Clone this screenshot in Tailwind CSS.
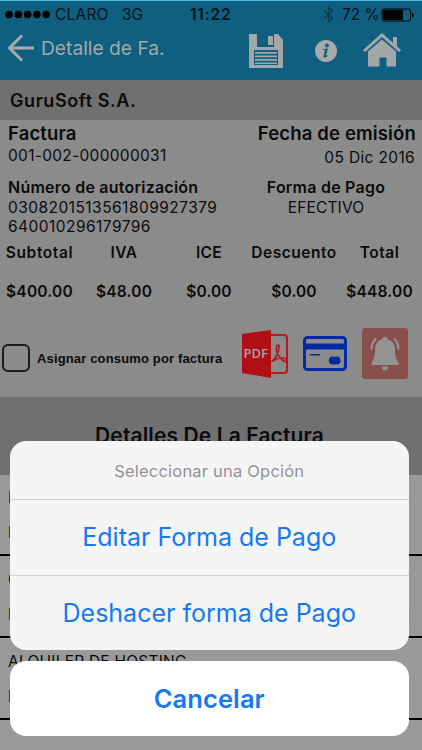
<!DOCTYPE html>
<html lang="es">
<head>
<meta charset="utf-8">
<title>Detalle de Factura</title>
<script src="https://cdn.jsdelivr.net/npm/@tailwindcss/browser@4"></script>
</head>
<body class="relative h-[750px] w-[422px] overflow-hidden bg-[#999] font-['Inter','Liberation_Sans',sans-serif] text-[#0b0b0b]">
<header class="h-20 border-t border-[#4fb9df] bg-[#0e5f80]">
  <div class="flex h-[27px] items-center pl-[5px] pr-[8px] text-[15.5px] text-[#05131a]">
    <svg class="h-[9px] w-[45px]" viewBox="0 0 45 9" fill="#000"><circle cx="4" cy="4.5" r="3.8"/><circle cx="13.3" cy="4.5" r="3.8"/><circle cx="22.6" cy="4.5" r="3.8"/><circle cx="31.9" cy="4.5" r="3.8"/><circle cx="41.2" cy="4.5" r="3.8"/></svg>
    <span class="ml-[5px] w-[67px] tracking-[.2px]">CLARO</span><span class="w-[68px]">3G</span>
    <span class="font-semibold tracking-[.8px]">11:22</span>
    <svg class="ml-auto h-[17px] w-[11px]" viewBox="0 0 11 17" fill="none" stroke="#0a3a50" stroke-width="1.3"><path d="M1 4.500 9.500 12 5.500 16V1l4 4L1 12.500"/></svg>
    <span class="ml-[8px] w-[39px] whitespace-nowrap text-[15.5px]">72 %</span>
    <svg class="h-[14px] w-[33px]" viewBox="0 0 33 14"><rect x="1" y="1" width="28.500" height="12" rx="2" fill="none" stroke="#000"/><rect x="2" y="2" width="20" height="10" rx="1"/><path d="M31 4.500c2 .6 2 4.400 0 5z"/></svg>
  </div>
  <div class="flex h-[46px] items-center pl-[7px]">
    <svg class="mt-[-6px] h-7 w-7" viewBox="0 0 28 28" fill="none" stroke="#a9a9a9" stroke-width="3"><path d="M15 1.500 2.500 14 15 26.500M2.500 14H27"/></svg>
    <span class="mt-[-5px] ml-[6px] w-[208px] whitespace-nowrap text-[19.200px] text-[#a4a9ab]">Detalle de Fa.</span>
    <svg class="h-[34px] w-[34px]" viewBox="0 0 34 34" fill="#a3a7a8"><path fill-rule="evenodd" d="M0 0h8v13h17V0h4l5 6v28H0zM5 16h24v15H5zM19 2h5v9h-5z"/><path d="M6 18h22v1.800H6zm0 3.500h22v1.800H6zM6 25h22v1.800H6zm0 3.500h22v1.500H6z"/></svg>
    <svg class="ml-[32px] h-[22px] w-[22px]" viewBox="0 0 22 22"><circle cx="11" cy="11" r="11" fill="#a9a9a9"/><g fill="#0e5f80"><circle cx="12" cy="5.500" r="1.900"/><path d="M8 9l5-.5-1.800 6.800c-.2.900.4.700 1.600-.3l.3.600c-2.800 3-5.200 2.300-4.600.1L10 10.300 8 9.800z"/></g></svg>
    <svg class="mt-[-2px] ml-[26px] h-[34px] w-[38px]" viewBox="0 0 38 34" fill="#a3a7a8"><path d="M19 0 38 17l-2 2L19 4 2 19l-2-2zM30 4h4v10l-4-3.500z"/><path d="M19 6.500 33 18.500V33.500h-9.500v-9h-7v9H5v-15z"/></svg>
  </div>
</header>
<main>
  <h1 class="flex h-[40px] items-center bg-[#707070] pl-[10px] text-[18px] font-semibold tracking-[.57px]">GuruSoft S.A.</h1>
  <section class="h-[277px] bg-[#8b8b8b]">
    <div class="flex h-[54px] justify-between pl-[8px] pr-[6px]">
      <div><h2 class="pt-[1px] text-[18.500px] leading-6 font-semibold tracking-[.15px]">Factura</h2><p class="text-[15.500px] leading-[22px] tracking-[.3px]">001-002-000000031</p></div>
      <div class="text-right"><h2 class="pt-[1px] text-[18.500px] leading-6 font-semibold tracking-[.15px]">Fecha de emisión</h2><p class="pt-px pr-px text-[15.500px] leading-[24px] tracking-[.35px]">05 Dic 2016</p></div>
    </div>
    <div class="flex h-[64px] pt-[3px] pl-[8px] whitespace-nowrap">
      <div class="w-[218px]"><h3 class="text-[16px] leading-[20px] font-semibold tracking-[.23px]">Número de autorización</h3><p class="pt-[2px] text-[15.500px] leading-[18.500px] tracking-[.46px]">0308201513561809927379<br>640010296179796</p></div>
      <div class="w-[200px] text-center"><div class="ml-[6px]"><h3 class="text-[16px] leading-[20px] font-semibold tracking-[.23px]">Forma de Pago</h3><p class="pt-[2px] text-[15.500px] leading-[18.500px] tracking-[.15px]">EFECTIVO</p></div></div>
    </div>
    <div class="grid h-[78px] grid-cols-[79px_90px_80px_90px_81px] grid-rows-[30px_48px] items-center text-center text-[15.500px] font-semibold tracking-[.1px] whitespace-nowrap">
      <span class="tracking-[.6px]">Subtotal</span><span class="tracking-[.5px]">IVA</span><span class="tracking-[.3px]">ICE</span><span class="tracking-[.5px]">Descuento</span><span class="tracking-[.5px]">Total</span>
      <span class="tracking-[.2px]">$400.00</span><span class="tracking-[.2px]">$48.00</span><span>$0.00</span><span>$0.00</span><span class="tracking-[.2px]">$448.00</span>
    </div>
    <div class="flex h-[77px] items-center pl-[2px]">
      <div class="mt-[6px] h-[28px] w-[28px] rounded-[6px] border-2 border-[#1b1b1b]"></div>
      <span class="mt-[8px] ml-[7px] w-[205px] whitespace-nowrap font-['Liberation_Sans'] text-[13px] font-bold tracking-[.15px]">Asignar consumo por factura</span>
      <svg class="mt-[-2px] h-[48px] w-[47px]" viewBox="0 0 47 48"><path d="M28 5h14q3 0 3 3v32q0 3-3 3H28" fill="none" stroke="#bc1620" stroke-width="2"/><path d="M0 4 29 0v48L0 43z" fill="#b20e16"/><path d="M29.500 31.500c9-5 14-4 15.500-1 0 2-4 1-6-2-4-4-5-9-4.500-12 .4-2 3-2 2.800.3-.5 6-4.300 13-7.800 14.700" fill="none" stroke="#bc1620" stroke-width="1.700"/><text x="1.500" y="28" font-family="Open Sans" font-size="13" font-weight="600" textLength="24.500" lengthAdjust="spacingAndGlyphs" fill="#a5a5a5">PDF</text></svg>
      <svg class="mt-[-2px] ml-[14px] h-[35px] w-[44px]" viewBox="0 0 44 35"><rect x="1.500" y="1.500" width="41" height="32" rx="3" fill="none" stroke="#0429a5" stroke-width="3"/><path d="M2 7.500h40v6H2zM7 18h10v1.600H7z" fill="#0429a5"/><circle cx="29.800" cy="24.500" r="4" fill="#0429a5"/><circle cx="33.500" cy="24.500" r="4" fill="#0429a5"/></svg>
      <div class="mt-[-3px] ml-[15px] h-[51px] w-[46px] rounded-[3px] bg-[#894f4c]"><svg class="h-[51px] w-[46px]" viewBox="0 0 46 51" fill="#949494"><path d="M23 9c2 0 3 1 3 2.500 5 1.500 7 5.500 7 11 0 8 2 9 3.500 13V37h-27v-1.500c1.500-4 3.500-5 3.500-13 0-5.500 2-9.500 7-11C20 10 21 9 23 9zM20 38.500h6q0 4-3 4t-3-4z"/><path d="M14 10.500c-3 3-4.500 6-4.500 11M32 10.500c3 3 4.500 6 4.500 11" fill="none" stroke="#949494" stroke-width="2.200"/></svg></div>
    </div>
  </section>
  <h2 class="h-[78px] bg-[#707070] pt-[25px] pr-[3px] text-center text-[21px] leading-[28px] font-semibold tracking-[.12px]">Detalles De La Factura</h2>
  <ul class="bg-[#999] text-[15.500px] leading-5">
    <li class="h-[81px] border-b-2 border-black pr-[13px] pl-[8px] pt-[13px]"><p>DOMINIO</p><div class="mt-[15px] flex justify-between text-[#7a1428]"><span class="font-semibold">Precio</span><span class="text-black">4</span></div></li>
    <li class="h-[82px] border-b-2 border-black pr-[12px] pl-[8px] pt-[14px]"><p>CORREO</p><div class="mt-[15px] flex justify-between text-[#7a1428]"><span class="font-semibold">Precio</span><span class="text-black">2</span></div></li>
    <li class="h-[82px] border-b-2 border-black pr-[13px] pl-[8px] pt-[14px]"><p class="tracking-[.22px]">ALQUILER DE HOSTING</p><div class="mt-[15px] flex justify-between text-[#7a1428]"><span class="font-semibold">Precio</span><span class="text-black">4</span></div></li>
  </ul>
</main>
<div class="absolute inset-x-[10px] top-[441px] flex w-[398.500px] flex-col gap-[11px] text-center text-[#1479f2]">
  <div class="h-[209px] overflow-hidden rounded-[16px] bg-[#f6f5f6]">
    <p class="h-[59px] border-b border-[#d3d3d6] text-[16.500px] leading-[60px] tracking-[.2px] text-[#929294]">Seleccionar una Opción</p>
    <button class="block h-[76px] w-full border-b border-[#d3d3d6] pt-px text-[25px]">Editar Forma de Pago</button>
    <button class="block h-[75px] w-full pt-px text-[25px]">Deshacer forma de Pago</button>
  </div>
  <button class="h-[75px] rounded-[16px] bg-white pt-px text-[25.500px] font-semibold tracking-[.1px]">Cancelar</button>
</div>
</body>
</html>
